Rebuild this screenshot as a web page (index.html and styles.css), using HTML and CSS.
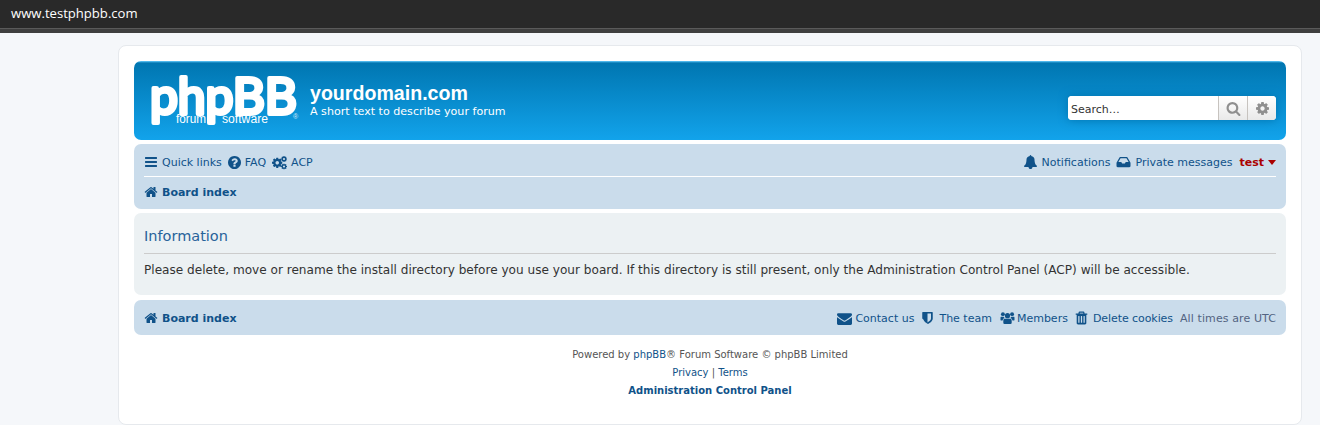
FILE: index.html
```html
<!DOCTYPE html>
<html lang="en">
<head>
    <meta charset="UTF-8">
    <meta name="viewport" content="width=device-width, initial-scale=1.0">
    <title>yourdomain.com - Information</title>
    <link rel="stylesheet" href="styles.css">
</head>
<body>
    <svg class="icon-defs" width="0" height="0" aria-hidden="true">
        <defs>
            <symbol id="i-bars" viewBox="0 0 1792 1792"><path d="M1664 1344v128q0 26-19 45t-45 19H192q-26 0-45-19t-19-45v-128q0-26 19-45t45-19h1408q26 0 45 19t19 45zm0-512v128q0 26-19 45t-45 19H192q-26 0-45-19t-19-45V832q0-26 19-45t45-19h1408q26 0 45 19t19 45zm0-512v128q0 26-19 45t-45 19H192q-26 0-45-19t-19-45V320q0-26 19-45t45-19h1408q26 0 45 19t19 45z"/></symbol>
            <symbol id="i-question" viewBox="128 128 1536 1536"><path d="M1024 1376v-192q0-14-9-23t-23-9H800q-14 0-23 9t-9 23v192q0 14 9 23t23 9h192q14 0 23-9t9-23zm256-672q0-88-55.500-163T1086 425t-170-41q-243 0-371 213-15 24 8 42l132 100q7 6 19 6 16 0 25-12 53-68 86-92 34-24 86-24 48 0 85.500 26t37.500 59q0 38-20 61t-68 45q-63 28-115.500 86.500T768 1020v36q0 14 9 23t23 9h192q14 0 23-9t9-23q0-19 21.500-49.500T1100 957q32-18 49-28.500t46-35 44.500-48 28-60.500 12.500-81zm384 192q0 209-103 385.500T1281.500 1561 896 1664t-385.500-103T231 1281.500 128 896t103-385.500T510.500 231 896 128t385.500 103T1561 510.500 1664 896z"/></symbol>
            <symbol id="i-cog" viewBox="128 128 1536 1536"><path d="M1152 896q0-106-75-181t-181-75-181 75-75 181 75 181 181 75 181-75 75-181zm512-109v222q0 12-8 23t-20 13l-185 28q-19 54-39 91 35 50 107 138 10 12 10 25t-9 23q-27 37-99 108t-94 71q-12 0-26-9l-138-108q-44 23-91 38-16 136-29 186-7 28-36 28H785q-14 0-24.500-8.500T749 1634l-28-184q-49-16-90-37l-141 107q-10 9-25 9-14 0-25-11-126-114-165-168-7-10-7-23 0-12 8-23 15-21 51-66.500t54-70.500q-27-50-41-99l-183-27q-13-2-21-12.500T128 1005V783q0-12 8-23t19-13l186-28q14-46 39-92-40-57-107-138-10-12-10-24 0-10 9-23 26-36 98.500-107.500T465 263q13 0 26 10l138 107q44-23 91-38 16-136 29-186 7-28 36-28h222q14 0 24.500 8.500T1043 158l28 184q49 16 90 37l142-107q9-9 24-9 13 0 25 10 129 119 165 170 7 8 7 22 0 12-8 23-15 21-51 66.500t-54 70.500q26 50 41 98l183 28q13 2 21 12.500t8 23.500z"/></symbol>
            <symbol id="i-home" viewBox="0 0 1792 1792"><path d="M1472 992v480q0 26-19 45t-45 19h-384v-384H768v384H384q-26 0-45-19t-19-45V992q0-1 .5-3t.5-3l575-474 575 474q1 2 1 6zm223-69l-62 74q-8 9-21 11h-3q-13 0-21-7L896 424l-692 577q-12 8-24 7-13-2-21-11l-62-74q-8-10-7-23.500t11-21.500l719-599q32-26 76-26t76 26l244 204V288q0-14 9-23t23-9h192q14 0 23 9t9 23v408l219 182q10 8 11 21.500t-7 23.500z"/></symbol>
            <symbol id="i-bell" viewBox="0 0 1792 1792"><path d="M1728 1408q0 52-38 90t-90 38h-448q0 106-75 181t-181 75-181-75-75-181H192q-52 0-90-38t-38-90q50-42 91-88t85-119.500 74.500-158.500 50-206T384 576q0-152 117-282.500T808 135q-8-19-8-39 0-40 28-68t68-28 68 28 28 68q0 20-8 39 190 28 307 158.500T1408 576q0 139 19.500 260t50 206 74.500 158.500 85 119.500 91 88z"/></symbol>
            <symbol id="i-inbox" viewBox="0 0 1792 1792"><path fill-rule="evenodd" d="M480 256h832q50 0 78 44l370 620q32 52 32 110v386q0 60-42 102t-102 42H144q-60 0-102-42T0 1416v-386q0-58 32-110l370-620q28-44 78-44zm36 160L240 880h372l110 220h348l110-220h372l-276-464z"/></symbol>
            <symbol id="i-envelope" viewBox="0 128 1792 1536"><path d="M1792 710v794q0 66-47 113t-113 47H160q-66 0-113-47T0 1504V710q44 49 101 87 362 246 497 345 57 42 92.500 65.500t94.500 48 110 24.500h2q51 0 110-24.500t94.500-48 92.500-65.500q170-123 498-345 57-39 100-87zm0-294q0 79-49 151t-122 123q-376 261-468 325-10 7-42.500 30.500t-54 38-52 32.500-57.500 27-50 9h-2q-23 0-50-9t-57.500-27-52-32.500-54-38T639 1015q-91-64-262-182.500T172 690q-62-42-117-115.500T0 438q0-78 41.500-130T160 256h1472q65 0 112.500 47t47.500 113z"/></symbol>
            <symbol id="i-shield" viewBox="0 0 1792 1792"><path fill-rule="evenodd" d="M288 128h1216q26 0 45 19t19 45v768q0 86-33.500 170.500t-83 150-118 127.500-126.500 103-121 77.500-89.500 42.500q-17 9-37 9t-37-9q-32-14-89.500-42.500t-121-77.500-126.500-103-118-127.500-83-150T224 960V192q0-26 19-45t45-19zm608 192v1137q119-63 213-137 235-184 235-360V320z"/></symbol>
            <symbol id="i-users" viewBox="0 0 1792 1792"><circle cx="896" cy="600" r="330"/><circle cx="310" cy="400" r="250"/><circle cx="1482" cy="400" r="250"/><path d="M530 980h732q170 0 170 220v300q0 150-150 150H510q-150 0-150-150v-300q0-220 170-220zM60 720h350q40 120 130 190-240 40-280 300H60q-60 0-60-90V890q0-170 60-170zm1322 0h350q60 0 60 170v230q0 90-60 90h-200q-40-260-280-300 90-70 130-190z"/></symbol>
            <symbol id="i-trash" viewBox="0 0 1792 1792"><path fill-rule="evenodd" d="M640 64h512q40 0 68 28t40 68l32 160h316q32 0 32 32v96q0 32-32 32h-96v1056q0 90-50 141t-110 51H440q-60 0-110-51t-50-141V480h-96q-32 0-32-32v-96q0-32 32-32h316l32-160q12-40 40-68t68-28zm20 256h472l-24-96H684zM608 640h-96q-32 0-32 32v800q0 32 32 32h96q32 0 32-32V672q0-32-32-32zm336 0h-96q-32 0-32 32v800q0 32 32 32h96q32 0 32-32V672q0-32-32-32zm336 0h-96q-32 0-32 32v800q0 32 32 32h96q32 0 32-32V672q0-32-32-32z"/></symbol>
            <symbol id="i-search" viewBox="0 0 1792 1792"><path d="M1216 832q0-185-131.500-316.500T768 384 451.500 515.500 320 832t131.500 316.500T768 1280t316.500-131.500T1216 832zm512 832q0 52-38 90t-90 38q-54 0-90-38l-343-342q-179 124-399 124-143 0-273.500-55.500t-225-150-150-225T64 832t55.500-273.500 150-225 225-150T768 128t273.500 55.500 225 150 150 225T1472 832q0 220-124 399l343 343q37 37 37 90z"/></symbol>
        </defs>
    </svg>

    <div class="browser-bar">www.testphpbb.com</div>

    <div class="wrap">
        <header class="headerbar">
            <svg class="logo" width="152" height="79" viewBox="0 0 152 79" role="img" aria-label="phpBB forum software">
                <text class="logo-word" x="1" y="53" textLength="147" lengthAdjust="spacingAndGlyphs">phpBB</text>
                <text class="logo-small" x="27" y="62" textLength="30" lengthAdjust="spacingAndGlyphs">forum</text>
                <text class="logo-small" x="73" y="62" textLength="46" lengthAdjust="spacingAndGlyphs">software</text>
                <text class="logo-mark" x="144" y="58">®</text>
            </svg>
            <div class="site-description">
                <h1>yourdomain.com</h1>
                <p>A short text to describe your forum</p>
            </div>
            <form class="search-box">
                <input class="search-input" type="text" placeholder="Search…">
                <button class="search-btn" type="button"><svg class="icon icon-search"><use href="#i-search"/></svg></button>
                <button class="search-btn" type="button"><svg class="icon icon-settings"><use href="#i-cog"/></svg></button>
            </form>
        </header>

        <nav class="navbar">
            <div class="nav-row nav-row-top">
                <ul class="links">
                    <li><a href="#"><svg class="icon icon-narrow"><use href="#i-bars"/></svg>Quick links</a></li>
                    <li><a href="#"><svg class="icon icon-question"><use href="#i-question"/></svg>FAQ</a></li>
                    <li><a href="#"><svg class="icon icon-gears" viewBox="0 0 15 15"><use href="#i-cog" x="0" y="2.500" width="10.500" height="10.500"/><use href="#i-cog" x="9" y="1" width="6" height="6"/><use href="#i-cog" x="9" y="8.500" width="6" height="6"/></svg>ACP</a></li>
                </ul>
                <ul class="links">
                    <li><a href="#"><svg class="icon"><use href="#i-bell"/></svg>Notifications</a></li>
                    <li><a href="#"><svg class="icon"><use href="#i-inbox"/></svg>Private messages</a></li>
                    <li class="user-menu"><a href="#">test</a><span class="caret"></span></li>
                </ul>
            </div>
            <div class="nav-row nav-row-crumbs">
                <a class="crumb" href="#"><svg class="icon icon-narrow"><use href="#i-home"/></svg>Board index</a>
            </div>
        </nav>

        <section class="panel">
            <h2>Information</h2>
            <p>Please delete, move or rename the install directory before you use your board. If this directory is still present, only the Administration Control Panel (ACP) will be accessible.</p>
        </section>

        <nav class="navbar navbar-footer">
            <a class="crumb" href="#"><svg class="icon icon-narrow"><use href="#i-home"/></svg>Board index</a>
            <ul class="links">
                <li><a href="#"><svg class="icon icon-envelope"><use href="#i-envelope"/></svg>Contact us</a></li>
                <li><a href="#"><svg class="icon"><use href="#i-shield"/></svg>The team</a></li>
                <li><a href="#"><svg class="icon icon-users"><use href="#i-users"/></svg>Members</a></li>
                <li class="tight"><a href="#"><svg class="icon"><use href="#i-trash"/></svg>Delete cookies</a></li>
                <li class="times">All times are UTC</li>
            </ul>
        </nav>

        <footer class="copyright">
            <p>Powered by <a href="#">phpBB</a>® Forum Software © phpBB Limited</p>
            <p><a href="#">Privacy</a> | <a href="#">Terms</a></p>
            <p><a class="acp-link" href="#">Administration Control Panel</a></p>
        </footer>
    </div>
</body>
</html>
```

FILE: styles.css
```css
* {
    box-sizing: border-box;
}

body {
    margin: 0;
    background-color: #f5f7fa;
    color: #333;
    font-family: "DejaVu Sans", Verdana, sans-serif;
    font-size: 11px;
    line-height: 13px;
    overflow: hidden;
}

a {
    color: #105289;
    text-decoration: none;
}

ul {
    list-style: none;
    margin: 0;
    padding: 0;
}

.icon-defs {
    display: block;
    height: 0;
}

.icon {
    width: 15px;
    height: 14px;
    margin-right: 4px;
    fill: currentColor;
    flex: none;
}

.icon-narrow {
    width: 14px;
}

.icon-question {
    width: 13px;
    height: 13px;
}

.icon-gears {
    height: 15px;
}

.icon-envelope {
    height: 13px;
    margin-right: 3px;
}

.icon-users {
    margin: 0 2px 0 2px;
}

.browser-bar {
    height: 33px;
    padding: 5px 11px 0;
    background-color: #292929;
    border-bottom: 4px solid #3f3f3f;
    box-shadow: inset 0 -1px 0 #5a5a5a;
    color: #fff;
    font-family: "Open Sans", sans-serif;
    font-size: 13.100px;
    line-height: 16px;
}

.wrap {
    width: 1184px;
    height: 380px;
    margin: 12px 0 0 118px;
    padding: 15px;
    background-color: #fff;
    border: 1px solid #e6e9ed;
    border-radius: 8px;
}

/* header */
.headerbar {
    display: flex;
    align-items: flex-start;
    height: 79px;
    padding: 0 10px 0 15px;
    margin-bottom: 4px;
    border-radius: 7px;
    color: #fff;
    background-image: linear-gradient(to bottom, #6aceff 0, #0076b1 2px, #12a3eb 79px);
}

.logo {
    flex: none;
}

.logo-word {
    fill: #fff;
    stroke: #fff;
    stroke-width: 4px;
    stroke-linejoin: round;
    font-family: "Lato", sans-serif;
    font-size: 50px;
    font-weight: 400;
}

.logo-small {
    fill: #fff;
    font-family: "Liberation Sans", sans-serif;
    font-size: 12px;
}

.logo-mark {
    fill: #cfeafa;
    font-family: "Liberation Sans", sans-serif;
    font-size: 7px;
}

.site-description {
    margin-left: 9px;
    padding-top: 20px;
}

.site-description h1 {
    margin: 0;
    font-family: "Liberation Sans", sans-serif;
    font-size: 19.600px;
    font-weight: 700;
    line-height: 24px;
}

.site-description p {
    margin: 0;
    font-size: 11.100px;
    line-height: 13px;
}

.search-box {
    display: flex;
    width: 208px;
    height: 24px;
    margin: 35px 0 0 auto;
    border-radius: 4px;
    overflow: hidden;
    background-color: #fff;
    box-shadow: 0 0 10px #0075b0;
}

.search-input {
    flex: 1;
    min-width: 0;
    padding: 2px 3px 0;
    border: 0;
    background: #fff;
    font: 11px "DejaVu Sans", sans-serif;
    color: #333;
}

.search-input::placeholder {
    color: #333;
    opacity: 1;
}

.search-btn {
    display: flex;
    align-items: center;
    justify-content: center;
    width: 29px;
    padding: 0;
    border: 0;
    border-left: 1px solid #c7c3bf;
    background-image: linear-gradient(to bottom, #fff 0%, #e9e9e9 100%);
    color: #8f8f8f;
}

.search-btn .icon {
    margin: 0;
}

.search-btn .icon-search {
    width: 15px;
    height: 15px;
}

.search-btn .icon-settings {
    width: 13px;
    height: 13px;
}

/* nav bars */
.navbar {
    padding: 0 10px;
    background-color: #cadceb;
    border-radius: 7px;
}

.nav-row {
    display: flex;
    align-items: center;
}

.nav-row-top {
    justify-content: space-between;
    height: 33px;
    padding-top: 4px;
    border-bottom: 1px solid #fff;
}

.nav-row-crumbs {
    height: 32px;
    padding-bottom: 2px;
}

.links {
    display: flex;
    align-items: center;
    gap: 6px;
}

.links a,
.crumb {
    display: flex;
    align-items: center;
}

.crumb {
    font-weight: 700;
}

.tight {
    letter-spacing: -0.070px;
}

.user-menu {
    display: flex;
    align-items: center;
    margin-left: 1px;
}

.user-menu a {
    color: #aa0000;
    font-weight: 700;
}

.caret {
    width: 0;
    height: 0;
    margin-left: 4px;
    border-style: solid;
    border-width: 5px 4.500px 0;
    border-color: #aa0000 transparent transparent;
}

.panel {
    height: 82px;
    margin-top: 4px;
    padding: 10px;
    background-color: #ecf1f3;
    border-radius: 7px;
}

.panel h2 {
    margin: 0 0 9px;
    padding: 3px 0 6px;
    border-bottom: 1px solid #cccccc;
    color: #28639a;
    font-size: 14.500px;
    font-weight: 400;
    line-height: 21px;
}

.panel p {
    margin: 0;
    font-size: 12.100px;
    line-height: 15px;
}

.navbar-footer {
    display: flex;
    align-items: center;
    justify-content: space-between;
    height: 35px;
    margin-top: 5px;
    padding-top: 1px;
}

.times {
    margin-left: 1px;
    color: #536482;
    letter-spacing: 0.100px;
}

.copyright {
    padding-top: 11px;
    color: #555;
    font-size: 10px;
    line-height: 18px;
    text-align: center;
}

.copyright p {
    margin: 0;
}

.acp-link {
    font-weight: 700;
}
```
